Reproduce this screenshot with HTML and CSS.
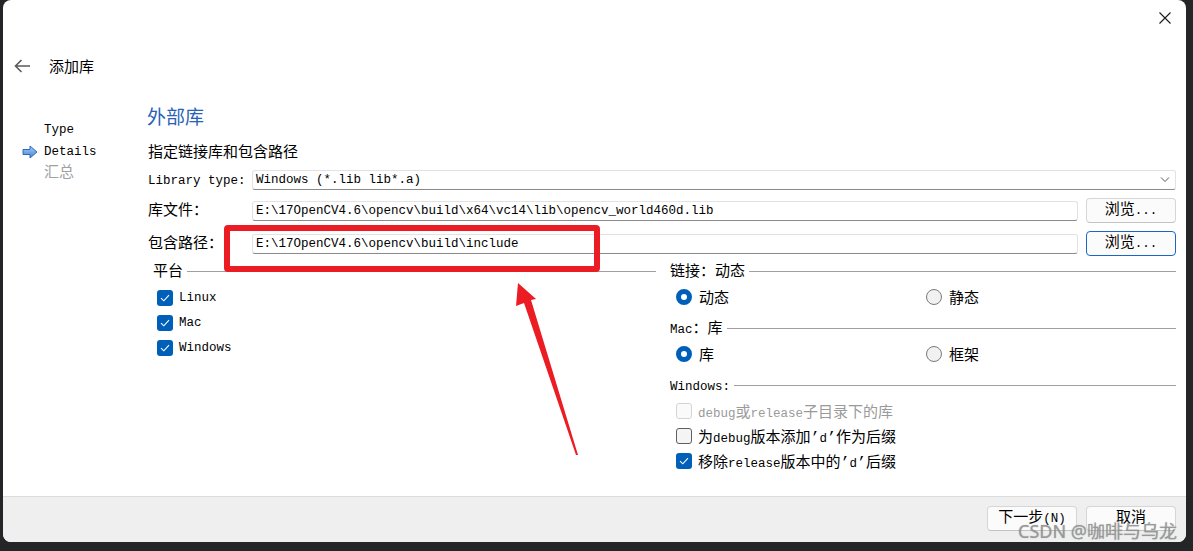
FILE: index.html
```html
<!DOCTYPE html>
<html>
<head>
    <meta charset="utf-8">
    <title>添加库</title>
    <link rel="stylesheet" href="styles.css">
</head>
<body>
<div class="win">
    <div class="top">
        <svg class="close" width="12" height="12" viewBox="0 0 12 12"><path d="M0.5 0.5L11.5 11.5M11.5 0.5L0.5 11.5" stroke="#1a1a1a" stroke-width="1.1" fill="none"/></svg>
    </div>

    <div class="title">
        <svg width="16" height="14" viewBox="0 0 16 14"><path d="M1.5 7H16M7.5 1L1.5 7L7.5 13" stroke="#5a5a5a" stroke-width="1.6" fill="none"/></svg>
        <span>添加库</span>
    </div>

    <div class="main">
        <div class="nav">
            <div class="step"><span class="slot"></span><span class="m">Type</span></div>
            <div class="step">
                <span class="slot">
                    <svg width="16" height="14" viewBox="0 0 16 14">
                        <defs><linearGradient id="pg" x1="0" y1="0" x2="0" y2="1"><stop offset="0" stop-color="#a9cdf4"/><stop offset="1" stop-color="#3f83d8"/></linearGradient></defs>
                        <polygon points="1,4.5 8,4.5 8,1 15,7 8,13 8,9.5 1,9.5" fill="url(#pg)" stroke="#2f69bb" stroke-width="1"/>
                    </svg>
                </span>
                <span class="m">Details</span>
            </div>
            <div class="step dim"><span class="slot"></span>汇总</div>
        </div>

        <div class="content">
            <h1>外部库</h1>
            <p class="sub">指定链接库和包含路径</p>

            <div class="form">
                <label class="m">Library type:</label>
                <div class="combo">
                    <span class="m">Windows (*.lib lib*.a)</span>
                    <svg width="10" height="6" viewBox="0 0 10 6"><path d="M1 0.5L5 4.5L9 0.5" stroke="#555" stroke-width="1" fill="none"/></svg>
                </div>

                <label>库文件：</label>
                <div class="field m">E:\17OpenCV4.6\opencv\build\x64\vc14\lib\opencv_world460d.lib</div>
                <button class="btn">浏览<span class="m">...</span></button>

                <label>包含路径：</label>
                <div class="field m">E:\17OpenCV4.6\opencv\build\include</div>
                <button class="btn focus">浏览<span class="m">...</span></button>
            </div>

            <div class="groups">
                <div class="col left">
                    <div class="gh"><span>平台</span></div>
                    <div class="items">
                        <div class="item"><span class="cb"><svg width="10" height="8" viewBox="0 0 10 8"><path d="M1 4.2L3.8 6.8L9 1.2" stroke="#fff" stroke-width="1.1" fill="none"/></svg></span><span class="m">Linux</span></div>
                        <div class="item"><span class="cb"><svg width="10" height="8" viewBox="0 0 10 8"><path d="M1 4.2L3.8 6.8L9 1.2" stroke="#fff" stroke-width="1.1" fill="none"/></svg></span><span class="m">Mac</span></div>
                        <div class="item"><span class="cb"><svg width="10" height="8" viewBox="0 0 10 8"><path d="M1 4.2L3.8 6.8L9 1.2" stroke="#fff" stroke-width="1.1" fill="none"/></svg></span><span class="m">Windows</span></div>
                    </div>
                </div>

                <div class="col right">
                    <div class="gh"><span>链接：动态</span></div>
                    <div class="radios">
                        <div class="radio"><span class="rb"></span>动态</div>
                        <div class="radio"><span class="rb off"></span>静态</div>
                    </div>

                    <div class="gh next"><span><span class="m">Mac</span>：库</span></div>
                    <div class="radios">
                        <div class="radio"><span class="rb"></span>库</div>
                        <div class="radio"><span class="rb off"></span>框架</div>
                    </div>

                    <div class="gh next"><span class="m">Windows:</span></div>
                    <div class="items">
                        <div class="item dis"><span class="cb off disabled"></span><span><span class="m">debug</span>或<span class="m">release</span>子目录下的库</span></div>
                        <div class="item"><span class="cb off"></span><span>为<span class="m">debug</span>版本添加’<span class="m">d</span>’作为后缀</span></div>
                        <div class="item"><span class="cb"><svg width="10" height="8" viewBox="0 0 10 8"><path d="M1 4.2L3.8 6.8L9 1.2" stroke="#fff" stroke-width="1.1" fill="none"/></svg></span><span>移除<span class="m">release</span>版本中的’<span class="m">d</span>’后缀</span></div>
                    </div>
                </div>
            </div>
        </div>
    </div>

    <div class="footer">
        <button class="btn">下一步<span class="m">(N)</span></button>
        <button class="btn">取消</button>
    </div>

    <!-- annotation drawn over the dialog -->
    <div class="mark"></div>
    <svg class="arrow" width="1183" height="542" viewBox="0 0 1183 542">
        <polygon points="515,283 533,299 528,300 575,455 573,455 521,303 513,306" fill="#ec1c24"/>
    </svg>
    <div class="wm">CSDN @咖啡与乌龙</div>
</div>
</body>
</html>
```

FILE: styles.css
```css
body {
    margin: 0;
    height: 551px;
    overflow: hidden;
    background: #242526;
    font-family: "Liberation Mono", "Noto Sans CJK SC", monospace;
    font-size: 15px;
    color: #000;
}

.m {font-size: 12.5px;}

.win {
    position: relative;
    margin-left: 3px;
    width: 1183px;
    height: 542px;
    background: #fff;
    border-radius: 8px;
    overflow: hidden;
    display: flex;
    flex-direction: column;
}

.top {
    height: 36px;
    display: flex;
    justify-content: flex-end;
    align-items: center;
    padding-right: 15px;
}

.title {
    height: 60px;
    display: flex;
    align-items: center;
    gap: 19px;
    padding-left: 11px;
}

.main {
    height: 400px;
    display: flex;
}

.nav {
    width: 144px;
    box-sizing: border-box;
    padding: 24px 0 0 19px;
}

.step {
    display: flex;
    align-items: center;
    height: 21.5px;
    line-height: 21px;
}

.step .slot {
    width: 16px;
    height: 14px;
    margin-right: 6px;
    display: flex;
}

.dim {color: #a0a0a0;}

.content {
    flex: 1;
    padding: 10px 10px 0 0;
}

h1 {
    margin: 0;
    font-size: 19px;
    font-weight: normal;
    line-height: 26px;
    color: #2762b6;
}

.sub {
    margin: 12px 0 0 1px;
    line-height: 20px;
}

.form {
    margin-top: 6px;
    display: grid;
    grid-template-columns: 97px 1fr 90px;
    grid-template-rows: 20px 25px 25px;
    column-gap: 8px;
    row-gap: 8px;
    align-items: center;
}

.form label {
    padding: 2px 0 0 1px;
    line-height: 20px;
    white-space: nowrap;
}

.combo, .field {
    height: 20px;
    box-sizing: border-box;
    border: 1px solid #e2e2e2;
    border-bottom-color: #8a8a8a;
    border-radius: 3px;
    background: #fff;
    padding: 0 3px;
    display: flex;
    align-items: center;
    white-space: nowrap;
    overflow: hidden;
}

.combo {
    grid-column: 2 / 4;
    justify-content: space-between;
    padding-right: 5px;
}

.btn {
    height: 25px;
    width: 90px;
    box-sizing: border-box;
    border: 1px solid #d6d6d6;
    border-bottom-color: #c2c2c2;
    border-radius: 4px;
    background: #fbfbfb;
    font-family: inherit;
    font-size: 15px;
    color: #000;
    padding: 0;
    line-height: 20px;
}

.btn.focus {border-color: #1a66c4;}

.groups {
    margin-top: 5px;
    display: grid;
    grid-template-columns: 509px 1fr;
    column-gap: 11px;
}

.gh {
    display: flex;
    align-items: center;
    gap: 4px;
    height: 20px;
    line-height: 20px;
}

.gh > span {margin-top: 3px;}

.gh::after {
    content: "";
    flex: 1;
    height: 1px;
    background: #a0a0a0;
}

.left .gh {padding-left: 6px;}
.right .gh {padding-left: 3px;}
.gh.next {margin-top: 9px;}

.items {margin-top: 4px;}

.item {
    height: 25px;
    display: flex;
    align-items: center;
    gap: 6px;
    padding-left: 10px;
}

.right .item {padding-left: 9px;}
.right .items {margin-top: 3px;}
.item.dis {color: #9a9a9a;}

.cb {
    width: 16px;
    height: 16px;
    box-sizing: border-box;
    border-radius: 3px;
    background: #005fb8;
    display: flex;
    align-items: center;
    justify-content: center;
}

.cb.off {
    background: #f4f4f4;
    border: 1px solid #5f5f5f;
}

.cb.disabled {
    background: #fafafa;
    border-color: #d4d4d4;
}

.radios {
    margin-top: 3px;
    display: grid;
    grid-template-columns: 250px 1fr;
    padding-left: 9px;
}

.radio {
    height: 25px;
    display: flex;
    align-items: center;
    gap: 7px;
}

.rb {
    width: 16px;
    height: 16px;
    box-sizing: border-box;
    border-radius: 50%;
    border: 5px solid #005fb8;
    background: #fff;
}

.rb.off {
    border: 1px solid #7a7a7a;
    background: #f1f1f1;
}

.footer {
    height: 46px;
    box-sizing: border-box;
    border-top: 1px solid #dcdcdc;
    background: #efefef;
    display: flex;
    justify-content: flex-end;
    gap: 9px;
    padding: 9px 10px 0 0;
}

.mark {
    position: absolute;
    left: 221px;
    top: 225px;
    width: 376px;
    height: 47px;
    box-sizing: border-box;
    border: 6px solid #ec1c24;
    border-radius: 4px;
}

.arrow {
    position: absolute;
    left: 0;
    top: 0;
    pointer-events: none;
}

.wm {
    position: absolute;
    right: 9px;
    bottom: 0;
    font-family: "Noto Sans", "Noto Sans CJK SC", sans-serif;
    font-size: 18px;
    line-height: 22px;
    color: rgba(150, 150, 150, 0.85);
    text-shadow: 0 0 1px rgba(80, 80, 80, 0.5);
}
```
